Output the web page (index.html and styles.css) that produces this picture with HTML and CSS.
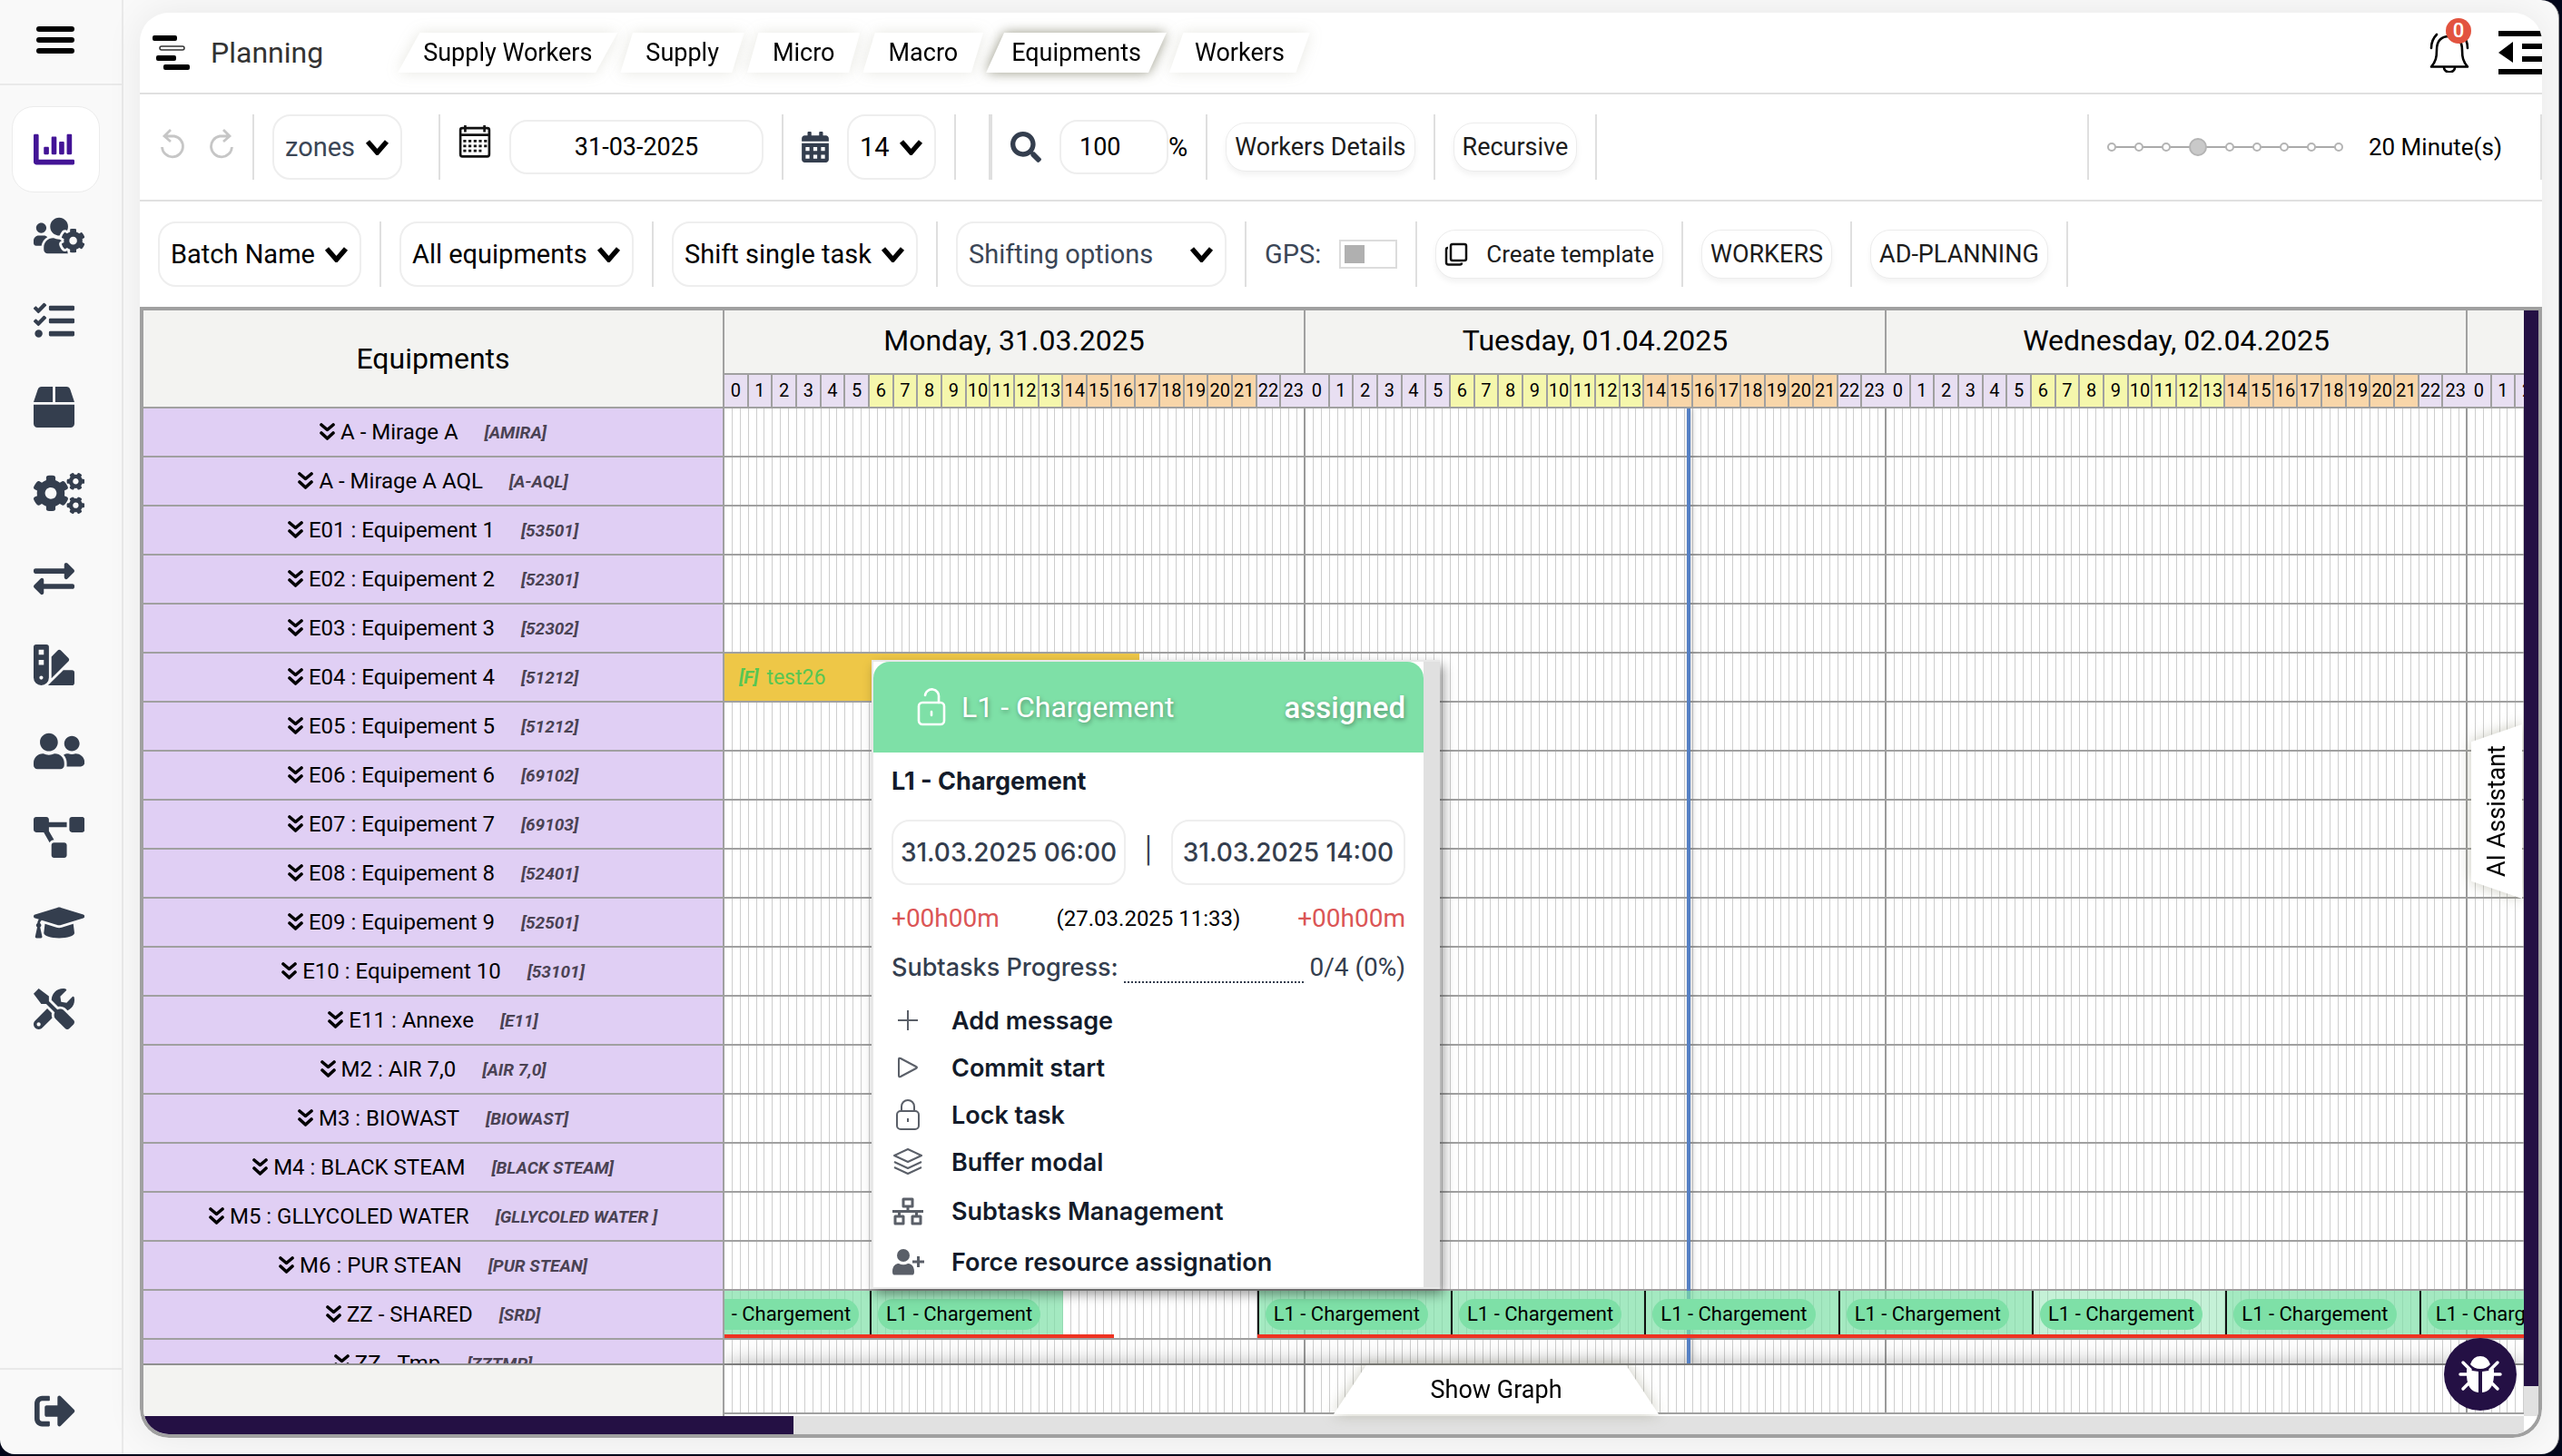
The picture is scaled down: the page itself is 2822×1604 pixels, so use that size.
FILE: index.html
```html
<!DOCTYPE html>
<html lang="en">

<head>
  <meta charset="UTF-8">
  <meta name="viewport" content="width=device-width, initial-scale=1.0">
  <title>Planning</title>
  <link rel="stylesheet" href="styles.css">
</head>

<body>
  <svg class="sprite" aria-hidden="true">
    <symbol id="i-caret" viewBox="0 0 27 18"><path d="M3 3l10.500 12L24 3" fill="none" stroke="#000" stroke-width="5.500"/></symbol>
    <symbol id="i-double" viewBox="0 0 17 20"><path d="M2 2l6.500 5.500L15 2M2 11l6.500 6L15 11" fill="none" stroke="#000" stroke-width="3.600" stroke-linecap="round" stroke-linejoin="round"/></symbol>
    <symbol id="i-gear" viewBox="0 0 640 512"><path fill-rule="evenodd" d="M512.1 191l-8.2 14.3c-3 5.300-9.400 7.500-15.100 5.400-11.800-4.400-22.600-10.700-32.100-18.600-4.600-3.800-5.800-10.500-2.800-15.700l8.200-14.300c-6.900-8-12.300-17.300-15.900-27.400h-16.500c-6 0-11.200-4.300-12.200-10.300-2-12-2.100-24.600 0-37.100 1-6 6.200-10.400 12.200-10.400h16.500c3.600-10.100 9-19.400 15.900-27.400l-8.200-14.300c-3-5.200-1.900-11.900 2.800-15.700 9.500-7.900 20.400-14.200 32.100-18.600 5.700-2.100 12.100.1 15.100 5.400l8.200 14.300c10.500-1.900 21.200-1.900 31.700 0L552 6.300c3-5.300 9.400-7.500 15.100-5.400 11.800 4.400 22.600 10.700 32.100 18.600 4.600 3.800 5.800 10.500 2.800 15.700l-8.200 14.300c6.900 8 12.300 17.300 15.900 27.400h16.500c6 0 11.200 4.300 12.200 10.300 2 12 2.100 24.600 0 37.100-1 6-6.200 10.400-12.200 10.400h-16.500c-3.600 10.100-9 19.400-15.900 27.400l8.200 14.300c3 5.200 1.900 11.900-2.800 15.700-9.500 7.900-20.400 14.200-32.100 18.600-5.700 2.100-12.100-.1-15.100-5.400l-8.200-14.300c-10.400 1.900-21.200 1.900-31.700 0zm-10.500-58.800c38.500 29.600 82.400-14.300 52.800-52.800-38.500-29.700-82.400 14.300-52.800 52.800z"/></symbol>
  </svg>

  <div class="window">
    <aside class="sidebar">
      <button class="burger" aria-label="Menu"><span></span><span></span><span></span></button>
      <nav class="side-nav">
        <a href="#" class="active" aria-label="Planning"><svg viewBox="0 0 512 512"><path d="M332.8 320h38.4c6.4 0 12.8-6.4 12.8-12.8V172.8c0-6.4-6.4-12.8-12.8-12.8h-38.4c-6.4 0-12.8 6.4-12.8 12.8v134.4c0 6.4 6.4 12.8 12.8 12.8zm96 0h38.4c6.4 0 12.8-6.4 12.8-12.8V76.8c0-6.4-6.4-12.8-12.8-12.8h-38.4c-6.4 0-12.8 6.4-12.8 12.8v230.4c0 6.4 6.4 12.8 12.8 12.8zm-288 0h38.4c6.4 0 12.8-6.4 12.8-12.8v-70.4c0-6.4-6.4-12.8-12.8-12.8h-38.4c-6.4 0-12.8 6.4-12.8 12.8v70.4c0 6.4 6.4 12.8 12.8 12.8zm96 0h38.4c6.4 0 12.8-6.4 12.8-12.8V108.8c0-6.4-6.4-12.8-12.8-12.8h-38.4c-6.4 0-12.8 6.4-12.8 12.8v198.4c0 6.4 6.4 12.8 12.8 12.8zM496 384H64V80c0-8.84-7.16-16-16-16H16C7.16 64 0 71.16 0 80v336c0 17.67 14.33 32 32 32h464c8.84 0 16-7.16 16-16v-32c0-8.84-7.16-16-16-16z"/></svg></a>
        <a href="#" aria-label="Teams"><svg viewBox="0 0 640 512"><path d="M610.5 341.3c2.6-14.1 2.6-28.5 0-42.6l25.8-14.9c3-1.7 4.3-5.2 3.3-8.5-6.7-21.6-18.2-41.2-33.2-57.4-2.3-2.5-6-3.1-9-1.4l-25.8 14.9c-10.9-9.3-23.4-16.5-36.9-21.3v-29.8c0-3.4-2.4-6.4-5.7-7.1-22.3-5-45-4.8-66.2 0-3.3.7-5.7 3.7-5.7 7.1v29.8c-13.5 4.8-26 12-36.9 21.3l-25.8-14.9c-2.9-1.7-6.7-1.1-9 1.4-15 16.2-26.5 35.8-33.2 57.4-1 3.3.4 6.8 3.3 8.5l25.8 14.9c-2.6 14.1-2.6 28.5 0 42.6l-25.8 14.9c-3 1.7-4.3 5.2-3.3 8.5 6.7 21.6 18.2 41.1 33.2 57.4 2.3 2.5 6 3.1 9 1.4l25.8-14.9c10.9 9.3 23.4 16.5 36.9 21.3v29.8c0 3.4 2.4 6.4 5.7 7.1 22.3 5 45 4.8 66.2 0 3.3-.7 5.7-3.7 5.7-7.1v-29.8c13.5-4.8 26-12 36.9-21.3l25.8 14.9c2.9 1.7 6.7 1.1 9-1.4 15-16.2 26.5-35.8 33.2-57.4 1-3.3-.4-6.8-3.3-8.5l-25.8-14.9zM496 368.500c-26.8 0-48.500-21.8-48.500-48.500s21.8-48.500 48.500-48.500 48.500 21.8 48.500 48.500-21.7 48.500-48.500 48.500zM96 224c35.3 0 64-28.7 64-64s-28.7-64-64-64-64 28.7-64 64 28.7 64 64 64zm224 32c1.9 0 3.7-.5 5.6-.6 8.3-21.7 20.5-42.1 36.3-59.2 7.4-8 17.9-12.6 28.9-12.6 6.9 0 13.7 1.8 19.6 5.3l7.9 4.6c.8-.5 1.6-.9 2.4-1.4 7-14.6 11.2-30.8 11.2-48 0-61.9-50.1-112-112-112S208 82.1 208 144c0 61.9 50.1 112 112 112zm105.2 194.5c-2.3-1.2-4.6-2.6-6.8-3.9-8.2 4.8-15.3 9.8-27.5 9.8-10.9 0-21.4-4.6-28.9-12.6-18.3-19.8-32.3-43.9-40.2-69.6-10.7-34.5 24.9-49.7 25.8-50.3-.1-2.6-.1-5.2 0-7.8l-7.9-4.6c-3.8-2.2-7-5-9.8-8.1-3.3.2-6.5.6-9.8.6-24.6 0-47.6-6-68.5-16h-8.3C179.6 288 128 339.600 128 403.2V432c0 26.5 21.5 48 48 48h255.4c-3.7-6-6.2-12.8-6.2-20.3v-9.2zM173.1 274.6C161.5 263.1 145.6 256 128 256H64c-35.3 0-64 28.7-64 64v32c0 17.7 14.3 32 32 32h65.9c6.3-47.4 34.9-87.3 75.2-109.4z"/></svg></a>
        <a href="#" aria-label="Tasks"><svg viewBox="0 0 512 512"><path d="M139.610 35.500a12 12 0 0 0-17 0L58.930 98.810l-22.700-22.120a12 12 0 0 0-17 0L3.530 92.410a12 12 0 0 0 0 17l47.590 47.400a12.780 12.780 0 0 0 17.610 0l15.590-15.620L156.520 69a12.090 12.090 0 0 0 .09-17zm0 159.190a12 12 0 0 0-17 0l-63.680 63.720-22.700-22.100a12 12 0 0 0-17 0L3.530 252a12 12 0 0 0 0 17L51 316.500a12.770 12.770 0 0 0 17.600 0l15.700-15.690 72.200-72.220a12 12 0 0 0 .09-16.900zM64 368c-26.490 0-48.590 21.500-48.590 48S37.530 464 64 464a48 48 0 0 0 0-96zm432 16H208a16 16 0 0 0-16 16v32a16 16 0 0 0 16 16h288a16 16 0 0 0 16-16v-32a16 16 0 0 0-16-16zm0-320H208a16 16 0 0 0-16 16v32a16 16 0 0 0 16 16h288a16 16 0 0 0 16-16V80a16 16 0 0 0-16-16zm0 160H208a16 16 0 0 0-16 16v32a16 16 0 0 0 16 16h288a16 16 0 0 0 16-16v-32a16 16 0 0 0-16-16z"/></svg></a>
        <a href="#" aria-label="Products"><svg viewBox="0 0 512 512"><path d="M509.5 184.6L458.9 32.8C452.4 13.2 434.1 0 413.4 0H272v192h238.7c-.4-2.500-.4-5-1.2-7.4zM240 0H98.6c-20.7 0-39 13.2-45.500 32.8L2.500 184.6c-.8 2.4-.8 4.9-1.2 7.4H240V0zM0 224v240c0 26.500 21.500 48 48 48h416c26.500 0 48-21.500 48-48V224H0z"/></svg></a>
        <a href="#" aria-label="Settings"><svg viewBox="0 0 640 512"><path fill-rule="evenodd" d="M386.3 286.1l33.7 16.8c10.1 5.8 14.5 18.1 10.5 29.1-8.9 24.2-26.4 46.4-42.6 65.8-7.4 8.9-20.2 11.1-30.3 5.3l-29.1-16.8c-16 13.7-34.6 24.6-54.9 31.7v33.6c0 11.6-8.3 21.6-19.7 23.6-24.6 4.2-50.4 4.4-75.9 0-11.5-2-20-11.9-20-23.6V418c-20.3-7.2-38.9-18-54.9-31.7L74 403c-10 5.8-22.9 3.6-30.3-5.3-16.2-19.4-33.3-41.6-42.2-65.7-4-10.9.4-23.2 10.5-29.1l33.3-16.8c-3.9-20.9-3.9-42.4 0-63.4L12 205.8c-10.1-5.8-14.6-18.1-10.5-29 8.9-24.2 26-46.4 42.2-65.8 7.4-8.9 20.2-11.1 30.3-5.3l29.1 16.8c16-13.7 34.6-24.6 54.9-31.7V57.1c0-11.5 8.2-21.5 19.6-23.5 24.6-4.2 50.5-4.4 76-.1 11.5 2 20 11.9 20 23.6v33.6c20.3 7.2 38.9 18 54.9 31.7l29.1-16.8c10-5.8 22.9-3.6 30.3 5.3 16.2 19.4 33.2 41.6 42.1 65.8 4 10.9.1 23.2-10 29.1l-33.7 16.8c3.9 21 3.9 42.5 0 63.5zm-117.6 21.1c59.2-77-28.7-164.9-105.7-105.7-59.2 77 28.7 164.9 105.7 105.7z"/><use href="#i-gear" width="640" height="512"/><use href="#i-gear" width="640" height="512" y="300"/></svg></a>
        <a href="#" aria-label="Transfers"><svg viewBox="0 0 512 512"><path d="M0 168v-16c0-13.255 10.745-24 24-24h360V80c0-21.367 25.899-32.042 40.971-16.971l80 80c9.372 9.373 9.372 24.569 0 33.941l-80 80C409.956 271.982 384 261.456 384 240v-48H24c-13.255 0-24-10.745-24-24zm488 152H128v-48c0-21.314-25.862-32.080-40.971-16.971l-80 80c-9.372 9.373-9.372 24.569 0 33.941l80 80C102.057 463.997 128 453.437 128 432v-48h360c13.255 0 24-10.745 24-24v-16c0-13.255-10.745-24-24-24z"/></svg></a>
        <a href="#" aria-label="Colors"><svg viewBox="0 0 512 512"><path d="M434.660,167.710h0L344.500,77.360a31.830,31.830,0,0,0-45-.07h0l-.07.07L224,152.880V424L434.660,212.900A32,32,0,0,0,434.660,167.710ZM480,320H373.090L186.680,506.510c-2.060,2.070-4.500,3.580-6.680,5.490H480a32,32,0,0,0,32-32V352A32,32,0,0,0,480,320ZM192,32A32,32,0,0,0,160,0H32A32,32,0,0,0,0,32V416a96,96,0,0,0,192,0ZM96,440a24,24,0,1,1,24-24A24,24,0,0,1,96,440Zm32-184H64V192h64Zm0-128H64V64h64Z"/></svg></a>
        <a href="#" aria-label="Users"><svg viewBox="0 0 640 512"><path d="M192 256c61.9 0 112-50.1 112-112S253.9 32 192 32 80 82.1 80 144s50.1 112 112 112zm76.8 32h-8.3c-20.8 10-43.9 16-68.5 16s-47.6-6-68.5-16h-8.3C51.6 288 0 339.6 0 403.2V432c0 26.5 21.5 48 48 48h288c26.5 0 48-21.5 48-48v-28.8c0-63.6-51.6-115.2-115.2-115.2zM480 256c53 0 96-43 96-96s-43-96-96-96-96 43-96 96 43 96 96 96zm48 32h-3.8c-13.9 4.8-28.6 8-44.2 8s-30.3-3.2-44.2-8H432c-20.4 0-39.2 5.9-55.7 15.4 24.4 26.3 39.7 61.2 39.7 99.8v38.4c0 2.2-.5 4.3-.6 6.4H592c26.5 0 48-21.5 48-48 0-61.9-50.1-112-112-112z"/></svg></a>
        <a href="#" aria-label="Workflows"><svg viewBox="0 0 640 512"><path d="M384 320H256c-17.670 0-32 14.330-32 32v128c0 17.670 14.330 32 32 32h128c17.670 0 32-14.330 32-32V352c0-17.670-14.330-32-32-32zM192 32c0-17.670-14.330-32-32-32H32C14.330 0 0 14.330 0 32v128c0 17.670 14.330 32 32 32h95.720l73.160 128.040C211.980 300.980 232.400 288 256 288h.28L192 175.510V128h224V64H192V32zM608 0H480c-17.670 0-32 14.330-32 32v128c0 17.670 14.330 32 32 32h128c17.670 0 32-14.330 32-32V32c0-17.670-14.330-32-32-32z"/></svg></a>
        <a href="#" aria-label="Training"><svg viewBox="0 0 640 512"><path d="M622.34 153.2L343.4 67.5c-15.2-4.67-31.6-4.67-46.79 0L17.66 153.2c-23.54 7.23-23.54 38.36 0 45.59l48.63 14.94c-10.67 13.19-17.23 29.28-17.88 46.9C38.78 266.15 32 276.11 32 288c0 10.78 5.68 19.85 13.86 25.65L20.33 428.53C18.11 438.52 25.71 448 35.94 448h56.11c10.24 0 17.84-9.48 15.62-19.47L82.14 313.65C90.32 307.85 96 298.78 96 288c0-11.57-6.47-21.25-15.66-26.87.76-15.02 8.44-28.3 20.69-36.72L296.6 284.5c9.06 2.78 26.44 6.25 46.79 0l278.95-85.7c23.55-7.24 23.55-38.36 0-45.6zM352.79 315.09c-28.53 8.76-52.84 3.92-65.59 0l-145.02-44.55L128 384c0 35.35 85.96 64 192 64s192-28.65 192-64l-14.18-113.47-145.03 44.56z"/></svg></a>
        <a href="#" aria-label="Tools"><svg viewBox="0 0 512 512"><path d="M501.1 395.7L384 278.6c-23.1-23.1-57.6-27.6-85.4-13.9L192 158.1V96L64 0 0 64l96 128h62.1l106.6 106.6c-13.6 27.8-9.2 62.3 13.9 85.4l117.1 117.1c14.6 14.6 38.2 14.6 52.7 0l52.7-52.7c14.5-14.6 14.5-38.2 0-52.7zM331.7 225c28.3 0 54.9 11 74.9 31l19.4 19.4c15.8-6.9 30.8-16.5 43.8-29.5 37.1-37.1 49.7-89.3 37.9-136.7-2.2-9-13.5-12.1-20.1-5.5l-74.4 74.4-67.9-11.3L334 98.9l74.4-74.4c6.6-6.6 3.4-17.9-5.7-20.2-47.4-11.7-99.6.9-136.6 37.9-28.5 28.5-41.9 66.1-41.2 103.6l82.1 82.1c8.1-1.9 16.5-2.9 24.7-2.9zm-103.9 82l-56.7-56.7L18.7 402.8c-25 25-25 65.500 0 90.500s65.500 25 90.500 0l123.6-123.6c-7.6-19.9-9.9-41.6-5-62.7zM64 472c-13.2 0-24-10.8-24-24 0-13.3 10.7-24 24-24s24 10.7 24 24c0 13.2-10.7 24-24 24z"/></svg></a>
      </nav>
      <a href="#" class="logout" aria-label="Log out"><svg viewBox="0 0 512 512"><path d="M497 273L329 441c-15 15-41 4.5-41-17v-96H152c-13.3 0-24-10.7-24-24v-96c0-13.3 10.7-24 24-24h136V88c0-21.4 25.9-32 41-17l168 168c9.3 9.4 9.3 24.600 0 34zM192 436v-40c0-6.6-5.4-12-12-12H96c-17.7 0-32-14.3-32-32V160c0-17.7 14.3-32 32-32h84c6.6 0 12-5.4 12-12V76c0-6.6-5.4-12-12-12H96c-53 0-96 43-96 96v192c0 53 43 96 96 96h84c6.6 0 12-5.4 12-12z"/></svg></a>
    </aside>

    <main class="card">
      <header class="page-head">
        <svg class="head-icon" viewBox="0 0 42 38">
          <rect x="0" y="0" width="27" height="6" rx="2"/>
          <rect x="8" y="12" width="27" height="4" rx="2" fill="#fff" stroke="#333" stroke-width="1.500"/>
          <rect x="4" y="22" width="22" height="6" rx="2"/>
          <rect x="12" y="32" width="29" height="6" rx="2"/>
        </svg>
        <h1>Planning</h1>
        <nav class="tabs">
          <span class="tab"><a href="#">Supply Workers</a></span>
          <span class="tab"><a href="#">Supply</a></span>
          <span class="tab"><a href="#">Micro</a></span>
          <span class="tab"><a href="#">Macro</a></span>
          <span class="tab current"><a href="#">Equipments</a></span>
          <span class="tab"><a href="#">Workers</a></span>
        </nav>
        <button class="bell" aria-label="Notifications">
          <svg viewBox="0 0 44 44" fill="none" stroke="#000" stroke-width="2.600" stroke-linecap="round" stroke-linejoin="round">
            <path d="M2 37.500h40C37 32 36 27 36 19C36 9 31 4 22 4S8 9 8 19c0 8-1 13-6 18.500z"/>
            <path d="M16 38.500a6 5 0 0 0 12 0M8 2Q2 8 2 17M36 2q6 6 6 15"/>
          </svg>
          <span class="badge">0</span>
        </button>
        <button class="fold" aria-label="Collapse panel">
          <svg viewBox="0 0 48 48"><path d="M0 0h48v6H0zM26 14h22v6H26zM26 28h22v6H26zM0 42h48v6H0zM0 24l16-12v23z"/></svg>
        </button>
      </header>

      <section class="toolbar">
        <div class="history">
          <button aria-label="Undo"><svg viewBox="0 0 30 34"><path d="M6 8h10a11.500 11.500 0 1 1-13.500 12M12 1L5 8l7 6" fill="none" stroke="#c6c6c6" stroke-width="2.800"/></svg></button>
          <button aria-label="Redo"><svg viewBox="0 0 30 34"><path d="M24 8H14a11.500 11.500 0 1 0 13.500 12M18 1l7 7-7 6" fill="none" stroke="#c6c6c6" stroke-width="2.800"/></svg></button>
        </div>
        <i class="sep"></i>
        <label class="select muted wide-gap"><select aria-label="Zones"><option>zones</option></select><svg><use href="#i-caret"/></svg></label>
        <i class="sep"></i>
        <label class="cal-label" for="start-date" aria-label="Start date">
          <svg viewBox="0 0 34 34"><path d="M2 5q0-2 2-2h26q2 0 2 2v25q0 2.500-2 2.500H4q-2 0-2-2.500zM1 10h32M7 0v7M27 0v7" fill="none" stroke="#111" stroke-width="2.500"/><path d="M5 16.500h25M5 21.500h25M5 26.500h19" stroke="#111" stroke-width="2.600" stroke-dasharray="3 2.400"/></svg>
        </label>
        <input class="field date" id="start-date" type="text" value="31-03-2025">
        <i class="sep"></i>
        <svg class="cal-solid" viewBox="0 0 448 512"><path d="M0 464c0 26.500 21.500 48 48 48h352c26.500 0 48-21.500 48-48V192H0zM400 64h-48V16c0-8.800-7.200-16-16-16h-32c-8.800 0-16 7.200-16 16v48H160V16c0-8.800-7.200-16-16-16h-32c-8.800 0-16 7.200-16 16v48H48C21.500 64 0 85.500 0 112v48h448v-48c0-26.500-21.500-48-48-48z"/><path fill="#fff" d="M64 256h64v64H64zM192 256h64v64h-64zM320 256h64v64h-64zM64 384h64v64H64zM192 384h64v64h-64zM320 384h64v64h-64z"/></svg>
        <label class="select"><select aria-label="Number of days"><option>14</option></select><svg><use href="#i-caret"/></svg></label>
        <i class="sep"></i>
        <i class="sep thick"></i>
        <label for="zoom" aria-label="Zoom"><svg class="glass" viewBox="0 0 512 512"><path d="M505 442.7L405.3 343c-4.5-4.5-10.6-7-17-7H372c27.6-35.3 44-79.7 44-128C416 93.1 322.9 0 208 0S0 93.1 0 208s93.1 208 208 208c48.3 0 92.7-16.4 128-44v16.3c0 6.4 2.5 12.5 7 17l99.7 99.7c9.4 9.4 24.6 9.4 33.9 0l28.3-28.3c9.4-9.4 9.4-24.6.1-34zM208 336c-70.7 0-128-57.2-128-128 0-70.7 57.2-128 128-128 70.7 0 128 57.2 128 128 0 70.7-57.2 128-128 128z"/></svg></label>
        <div class="zoom-box"><input class="field zoom" id="zoom" type="text" value="100"><span>%</span></div>
        <i class="sep"></i>
        <button class="btn">Workers Details</button>
        <i class="sep"></i>
        <button class="btn">Recursive</button>
        <i class="sep"></i>
        <i class="sep push"></i>
        <div class="steps" role="radiogroup" aria-label="Time step">
          <input type="radio" name="step" aria-label="1 minute"><input type="radio" name="step" aria-label="5 minutes"><input type="radio" name="step" aria-label="10 minutes"><input type="radio" name="step" aria-label="20 minutes" checked><input type="radio" name="step" aria-label="30 minutes"><input type="radio" name="step" aria-label="1 hour"><input type="radio" name="step" aria-label="2 hours"><input type="radio" name="step" aria-label="4 hours"><input type="radio" name="step" aria-label="8 hours">
        </div>
        <span class="step-text">20 Minute(s)</span>
        <i class="sep"></i>
      </section>

      <section class="toolbar">
        <label class="select"><select aria-label="Batch"><option>Batch Name</option></select><svg><use href="#i-caret"/></svg></label>
        <i class="sep"></i>
        <label class="select"><select aria-label="Equipments filter"><option>All equipments</option></select><svg><use href="#i-caret"/></svg></label>
        <i class="sep"></i>
        <label class="select"><select aria-label="Shift mode"><option>Shift single task</option></select><svg><use href="#i-caret"/></svg></label>
        <i class="sep"></i>
        <label class="select muted options"><select aria-label="Shifting options"><option>Shifting options</option></select><svg><use href="#i-caret"/></svg></label>
        <i class="sep"></i>
        <label class="gps">GPS: <input type="checkbox"></label>
        <i class="sep"></i>
        <button class="btn template"><svg viewBox="0 0 26 26" fill="none" stroke="#111" stroke-width="2.500" stroke-linejoin="round"><rect x="7" y="2" width="17" height="18" rx="2"/><path d="M4 6q-2 0-2 2v14q0 2.500 2.500 2.500H17q2 0 2-2"/></svg>Create template</button>
        <i class="sep"></i>
        <button class="btn">WORKERS</button>
        <i class="sep"></i>
        <button class="btn">AD-PLANNING</button>
        <i class="sep"></i>
      </section>

      <section class="gantt">
        <div class="gantt-main">
          <div class="gantt-head">
            <div class="corner">Equipments</div>
            <div class="days" id="days"></div>
          </div>

          <div class="gantt-body">
            <div class="rows" id="rows"></div>
            <div class="now"></div>

            <div class="popup">
              <div class="popup-scroll">
                <div class="popup-head">
                  <svg viewBox="0 0 32 42" fill="none" stroke="#fff" stroke-width="2.600" stroke-linecap="round"><rect x="2" y="16" width="28" height="24" rx="4"/><path d="M9 8a7 7 0 0 1 15 2v6M16 26v4"/></svg>
                  <span class="popup-name">L1 - Chargement</span>
                  <strong>assigned</strong>
                </div>
                <h2>L1 - Chargement</h2>
                <div class="range">
                  <input type="text" aria-label="Start" value="31.03.2025 06:00">
                  <span>|</span>
                  <input type="text" aria-label="End" value="31.03.2025 14:00">
                </div>
                <div class="delays"><span class="late">+00h00m</span><span>(27.03.2025 11:33)</span><span class="late">+00h00m</span></div>
                <div class="progress"><span>Subtasks Progress:</span><i></i><span class="count">0/4 (0%)</span></div>
                <ul class="menu">
                  <li><button><svg viewBox="0 0 36 36"><path d="M18 7v22M7 18h22"/></svg>Add message</button></li>
                  <li><button><svg viewBox="0 0 36 36"><path d="M8 9v18q0 2 2 1l17-9q2-1 0-2L10 8q-2-1-2 1z"/></svg>Commit start</button></li>
                  <li><button><svg viewBox="0 0 36 36"><rect x="6" y="14" width="24" height="20" rx="4"/><path d="M11 14V9a7 7 0 0 1 14 0v5M18 22v4"/></svg>Lock task</button></li>
                  <li><button><svg viewBox="0 0 36 36"><path d="M18 4l15 7-15 7-15-7zM3 18l15 7 15-7M3 24l15 7 15-7"/></svg>Buffer modal</button></li>
                  <li class="tall"><button><svg viewBox="0 0 36 36"><g stroke-width="3"><rect x="13" y="5" width="10" height="8"/><rect x="4" y="24" width="9" height="8"/><rect x="23" y="24" width="9" height="8"/><path d="M18 13v5M1 18.500h34M8.500 18v6M27.500 18v6"/></g></svg>Subtasks Management</button></li>
                  <li class="tall"><button><svg viewBox="0 0 36 36"><g fill="#5a5f68" stroke="none"><circle cx="13" cy="11" r="7"/><path d="M1 29c0-7 4-9 7-9q5 2.500 10 0c3 0 7 2 7 9 0 3-1 3.500-3 3.500H4c-2 0-3-.5-3-3.500z"/><path d="M28 12h3v4.500h5v3h-5V24h-3v-4.500h-5v-3h5z"/></g></svg>Force resource assignation</button></li>
                </ul>
              </div>
              <div class="popup-bar"></div>
            </div>

            <div class="assistant"><button>AI Assistant</button></div>
          </div>

          <div class="gantt-foot">
            <div class="foot-name"></div>
            <div class="foot-track"></div>
            <div class="graph-tab"><button>Show Graph</button></div>
          </div>
        </div>
        <div class="bar-y"><span></span></div>
        <div class="bar-x"><span></span></div>
      </section>
    </main>
  </div>

  <button class="bug" aria-label="Report a bug">
    <svg viewBox="0 0 48 40"><g stroke="#fff" stroke-width="3.500" stroke-linecap="round" fill="none"><path d="M5 7l8 8M43 7l-8 8M2 20h10M46 20H36M5 36l8-8M43 36l-8-8"/></g><path fill="#fff" d="M13 9Q16 0 24 0t11 9q-4 5-11 5T13 9zM9 14q7 3 13 3v23Q10 39 9 22zM39 14q-7 3-13 3v23q12-1 13-18z"/></svg>
  </button>

  <script src="planning.js"></script>
</body>

</html>
```
FILE: styles.css
```css
* {
  box-sizing: border-box;
}

:root {
  --day: 640px;
  --line: #a0a0a0;
  --soft: #e0e0e0;
  --slate: #343e4e;
  --purple: #241044;
  --green: #7ee0a7;
}

body {
  margin: 0;
  background: #02061a;
  font-family: Roboto, "Liberation Sans", sans-serif;
  color: #000;
}

button,
input,
select {
  font-family: inherit;
  font-size: 27px;
  color: inherit;
  margin: 0;
}

button {
  background: none;
  border: 0;
  padding: 0;
}

svg {
  display: block;
}

.sprite {
  position: absolute;
  width: 0;
  height: 0;
}

.window {
  display: flex;
  height: calc(100vh - 2px);
  margin-right: 3px;
  background: #f9f9f9;
  border-right: 1px solid #999;
  border-radius: 0 20px 20px 16px;
  overflow: hidden;
}

/* sidebar */
.sidebar {
  display: flex;
  flex-direction: column;
  width: 136px;
  flex: none;
  border-right: 2px solid #e9e9e9;
}

.burger {
  display: flex;
  flex-direction: column;
  justify-content: center;
  gap: 6px;
  height: 94px;
  padding: 0 0 4px 40px;
  border-bottom: 2px solid #e9e9e9;
}

.burger span {
  width: 42px;
  height: 6px;
  border-radius: 3px;
  background: #000;
}

.side-nav {
  display: grid;
  grid-auto-rows: 1fr;
  height: 1042px;
  margin: 23px 24px 0 13px;
}

.side-nav a {
  display: flex;
  align-items: center;
  padding-left: 23px;
  border: 1px solid transparent;
  border-radius: 24px;
}

.side-nav .active {
  background: #fff;
  border-color: #ececec;
}

.side-nav svg,
.logout svg {
  height: 45px;
  fill: var(--slate);
}

.side-nav .active svg {
  fill: #431496;
}

.logout {
  display: flex;
  align-items: center;
  height: 95px;
  margin-top: auto;
  padding: 0 0 2px 38px;
  border-top: 2px solid #e9e9e9;
}

/* white card */
.card {
  display: flex;
  flex-direction: column;
  flex: 1;
  min-width: 0;
  margin: 14px 18px 18px;
  background: #fff;
  border-radius: 32px;
  overflow: hidden;
  box-shadow: 0 0 40px rgba(0, 0, 0, 0.07);
}

.page-head {
  display: flex;
  align-items: center;
  height: 90px;
  padding-left: 14px;
  border-bottom: 2px solid var(--soft);
}

.head-icon {
  width: 42px;
  height: 38px;
}

.page-head h1 {
  margin: 0 82px 0 22px;
  font-size: 32px;
  font-weight: 400;
  color: #333;
}

.tabs {
  display: flex;
  gap: 3px;
  margin-right: auto;
}

.tab {
  filter: drop-shadow(0 0 8px rgba(120, 120, 90, 0.18));
}

.tab.current {
  filter: drop-shadow(0 0 7px rgba(80, 80, 50, 0.6));
}

.tab a {
  display: block;
  padding: 0 28px;
  font-size: 27px;
  line-height: 44px;
  color: #000;
  text-decoration: none;
  background: #fff;
  clip-path: polygon(10% 0, 100% 0, 90% 100%, 0 100%);
}

.bell {
  position: relative;
  width: 44px;
  height: 44px;
  margin-right: 32px;
}

.badge {
  position: absolute;
  top: -16px;
  left: 18px;
  width: 28px;
  height: 28px;
  border-radius: 50%;
  background: #e2533f;
  color: #fff;
  font-size: 22px;
  font-weight: 500;
  line-height: 28px;
}

.fold svg {
  width: 48px;
  height: 48px;
}

/* toolbars */
.toolbar {
  display: flex;
  align-items: center;
  gap: 20px;
  height: 118px;
  padding-left: 20px;
  border-bottom: 2px solid var(--soft);
}

.toolbar + .toolbar {
  height: 116px;
  border-bottom: 0;
}

.sep {
  flex: none;
  width: 2px;
  height: 72px;
  background: #dfdfdf;
}

.sep.thick {
  width: 4px;
  margin-left: 16px;
}

.wide-gap {
  margin-right: 20px;
}

.push {
  margin-left: auto;
}

.history {
  display: flex;
  gap: 22px;
  margin: 0 0 6px 2px;
}

.history svg {
  width: 30px;
  height: 34px;
}

.select {
  position: relative;
  display: block;
}

.select select {
  appearance: none;
  width: 100%;
  height: 72px;
  padding: 0 49px 0 12px;
  border: 2px solid #eeeeee;
  border-radius: 20px;
  background: #fff;
  font-size: 29px;
}

.select svg {
  position: absolute;
  right: 14px;
  top: 27px;
  width: 27px;
  height: 18px;
  pointer-events: none;
}

.muted,
.gps {
  color: #3b4656;
}

.options {
  width: 298px;
}

.cal-label {
  margin-bottom: 12px;
}

.cal-label svg {
  width: 36px;
  height: 36px;
}

.field {
  height: 60px;
  border: 2px solid #eeeeee;
  border-radius: 20px;
  background: #fff;
}

.date {
  width: 280px;
  text-align: center;
}

.cal-solid {
  width: 30px;
  height: 34px;
  fill: var(--slate);
}

.glass {
  width: 34px;
  height: 34px;
  fill: var(--slate);
}

.zoom-box {
  display: flex;
  align-items: center;
  font-size: 29px;
}

.zoom {
  width: 120px;
  padding: 0 20px;
}

.btn {
  height: 54px;
  padding: 0 9px;
  border: 1px solid #ececec;
  border-radius: 22px;
  background: #fff;
  box-shadow: 0 4px 6px rgba(0, 0, 0, 0.05);
  color: #1c1c1c;
}

.template {
  display: flex;
  align-items: center;
  gap: 20px;
  font-size: 26px;
}

.template svg {
  width: 26px;
  height: 26px;
}

.gps {
  display: flex;
  align-items: center;
  gap: 20px;
  font-size: 29px;
}

.gps input {
  appearance: none;
  width: 64px;
  height: 32px;
  padding: 4px;
  border: 2px solid #dcdcdc;
}

.gps input::before {
  content: "";
  display: block;
  width: 22px;
  height: 20px;
  background: #b0b0b0;
}

/* round dots joined by a line */
.steps {
  display: flex;
  align-items: center;
  gap: 20px;
  background: linear-gradient(#aaa, #aaa) center / calc(100% - 10px) 2px no-repeat;
}

.steps input {
  appearance: none;
  width: 10px;
  height: 10px;
  border: 2px solid #b4b4b4;
  border-radius: 50%;
  background: #fff;
}

.steps input:checked {
  width: 20px;
  height: 20px;
  background: #c9c9c9;
}

.step-text {
  margin: 0 22px 0 8px;
  font-size: 26px;
}

/* gantt */
.gantt {
  display: grid;
  grid-template-columns: minmax(0, 1fr) 16px;
  grid-template-rows: minmax(0, 1fr) 20px;
  flex: 1;
  min-height: 0;
  border: 4px solid #a0a0a0;
  border-radius: 0 0 32px 32px;
  overflow: hidden;
}

.gantt-main {
  display: flex;
  flex-direction: column;
  min-height: 0;
}

.gantt-head {
  display: flex;
  height: 108px;
  flex: none;
  background: #f3f3f1;
  border-bottom: 2px solid var(--line);
}

.corner,
.name,
.foot-name {
  flex: none;
  width: 640px;
  border-right: 2px solid var(--line);
}

.corner {
  display: flex;
  align-items: center;
  justify-content: center;
  font-size: 32px;
}

.days {
  display: flex;
  flex: 1;
  overflow: hidden;
}

.day {
  flex: none;
  width: var(--day);
}

.day-title {
  height: 71px;
  line-height: 66px;
  text-align: center;
  font-size: 32px;
  border-right: 2px solid var(--line);
  border-bottom: 2px solid var(--line);
}

.hours {
  display: grid;
  grid-template-columns: repeat(24, 1fr);
  height: 35px;
  font-size: 20px;
  line-height: 35px;
}

.hours span {
  display: flex;
  justify-content: center;
  min-width: 0;
  border-right: 2px solid var(--line);
}

.hours span:nth-child(24) {
  border-right: 0;
}

.night {
  background: #e8dff2;
}

.morning {
  background: #f5f7ac;
}

.evening {
  background: #f8d6a9;
}

.gantt-body {
  position: relative;
  flex: 1;
  min-height: 0;
  overflow: hidden;
}

.row {
  display: flex;
  height: 54px;
  border-bottom: 2px solid var(--line);
}

.name {
  display: flex;
  align-items: center;
  justify-content: center;
  background: #e0cff4;
  font-size: 24px;
}

.name svg {
  width: 17px;
  height: 20px;
  margin-right: 6px;
}

.name em {
  margin-left: 29px;
  font-size: 19px;
  font-weight: 700;
  color: #4a4253;
}

.track,
.foot-track {
  position: relative;
  flex: 1;
  overflow: hidden;
  background-color: #fff;
  background-image:
    repeating-linear-gradient(to right, transparent 0 calc(var(--day) - 2px), #9a9a9a calc(var(--day) - 2px) var(--day)),
    repeating-linear-gradient(to right, transparent 0 calc(var(--day) / 72 - 1px), #cecece calc(var(--day) / 72 - 1px) calc(var(--day) / 72));
}

.task {
  position: absolute;
  top: 0;
  bottom: 0;
  z-index: 2;
  display: flex;
  align-items: center;
  padding-left: 7px;
  border-left: 2px solid #111;
  background: rgba(126, 224, 167, 0.7);
  font-size: 22px;
  white-space: nowrap;
}

.task span {
  padding: 0 9px;
  line-height: 34px;
  border-radius: 17px;
  background: var(--green);
}

.task.light {
  background: rgba(126, 224, 167, 0.45);
}

.task.fixed {
  gap: 9px;
  padding-left: 16px;
  border: 0;
  background: #eec747;
  color: #57c653;
  font-size: 23px;
}

.fixed b {
  font-size: 20px;
  font-style: italic;
}

.late-line {
  position: absolute;
  bottom: 0;
  z-index: 2;
  height: 4px;
  background: #ee3322;
}

.now {
  position: absolute;
  top: 0;
  bottom: 0;
  left: 1700px;
  z-index: 1;
  width: 4px;
  background: #5580c4;
  box-shadow: 2px 0 6px rgba(0, 0, 0, 0.25);
}

.gantt-foot {
  position: relative;
  display: flex;
  height: 58px;
  flex: none;
  border-top: 2px solid #909090;
}

.foot-name {
  background: #f3f3f1;
}

.foot-track {
  height: 54px;
  border-bottom: 2px solid var(--line);
  overflow: visible;
  box-shadow: 0 -2px 24px rgba(0, 0, 0, 0.3);
  clip-path: inset(-26px 0 0 0);
}

.graph-tab {
  position: absolute;
  top: 0;
  left: 50%;
  z-index: 3;
  filter: drop-shadow(0 0 8px rgba(120, 120, 90, 0.4));
}

.graph-tab button {
  width: 358px;
  height: 54px;
  background: #fff;
  clip-path: polygon(10% 0, 90% 0, 100% 100%, 0 100%);
}

.bar-y {
  background: #e1e1e1;
}

.bar-y span {
  display: block;
  height: calc(100% - 33px);
  background: var(--purple);
}

.bar-x {
  background: #e1e1e1;
}

.bar-x span {
  display: block;
  width: 716px;
  height: 100%;
  background: var(--purple);
}

.assistant {
  position: absolute;
  top: 348px;
  right: 2px;
  z-index: 3;
  filter: drop-shadow(0 0 8px rgba(120, 120, 90, 0.4));
}

.assistant button {
  width: 56px;
  height: 192px;
  background: #fff;
  writing-mode: vertical-rl;
  transform: rotate(180deg);
  clip-path: polygon(0 0, 100% 10%, 100% 90%, 0 100%);
}

/* task popup */
.popup {
  position: absolute;
  top: 277px;
  left: 802px;
  z-index: 4;
  display: flex;
  width: 626px;
  height: 693px;
  border: 2px solid #e8e8e8;
  border-right: 0;
  background: #fff;
  box-shadow: 4px 6px 12px rgba(0, 0, 0, 0.4);
  font-family: Inter, "Liberation Sans", sans-serif;
  font-size: 28px;
  color: var(--slate);
}

.popup-scroll {
  flex: 1;
}

.popup-bar {
  width: 18px;
  background: #e0e0e0;
}

.popup-head {
  display: flex;
  align-items: center;
  height: 100px;
  padding: 0 20px 0 48px;
  border-radius: 18px 18px 0 0;
  background: var(--green);
  color: #fff;
  font-family: Roboto, "Liberation Sans", sans-serif;
  font-size: 32px;
  text-shadow: 1px 2px 5px rgba(0, 0, 0, 0.35);
}

.popup-head svg {
  width: 32px;
  height: 42px;
  margin-right: 17px;
}

.popup-head strong {
  margin-left: auto;
  font-size: 33px;
  font-weight: 500;
}

.popup h2 {
  margin: 0;
  padding: 12px 20px 0;
  font-size: 27px;
  font-weight: 700;
  line-height: 40px;
  color: #131b2a;
}

.range,
.delays,
.progress {
  display: flex;
  align-items: center;
  justify-content: space-between;
  margin: 22px 20px 0;
}

.range span {
  padding-bottom: 4px;
}

.range input {
  width: 258px;
  height: 72px;
  padding: 0;
  border: 2px solid #eeeeee;
  border-radius: 20px;
  text-align: center;
  font-size: 28px;
  font-weight: 500;
}

.delays {
  margin-top: 20px;
  font-family: Roboto, "Liberation Sans", sans-serif;
  font-size: 24px;
  line-height: 34px;
  color: #000;
}

.late {
  font-size: 28px;
  color: #db5555;
}

.progress {
  margin-top: 17px;
  font-size: 27px;
  font-weight: 500;
  line-height: 40px;
}

.progress i {
  flex: 1;
  height: 34px;
  margin: 0 6px;
  border-bottom: 2px dotted var(--slate);
}

.count {
  font-family: Roboto, "Liberation Sans", sans-serif;
  font-size: 28px;
  font-weight: 400;
}

.menu {
  margin: 12px 0 0;
  padding: 0;
  list-style: none;
}

.menu button {
  display: flex;
  align-items: center;
  height: 52px;
  padding-left: 20px;
  font-size: 27px;
  font-weight: 600;
  color: #131b2a;
}

.menu .tall button {
  height: 56px;
}

.menu svg {
  width: 36px;
  height: 36px;
  margin-right: 30px;
  fill: none;
  stroke: #5a5f68;
  stroke-width: 2;
  stroke-linejoin: round;
}

.bug {
  position: fixed;
  right: 50px;
  bottom: 50px;
  z-index: 5;
  display: flex;
  align-items: center;
  justify-content: center;
  width: 80px;
  height: 80px;
  border-radius: 50%;
  background: var(--purple);
}

.bug svg {
  width: 48px;
  height: 40px;
}
```
FILE: planning.js
```js
// title and number of hours loaded, the last day is only partly scrolled in
const days = [
  ["Monday, 31.03.2025", 24],
  ["Tuesday, 01.04.2025", 24],
  ["Wednesday, 02.04.2025", 24],
  ["", 3]
];

const equipments = [
  ["A - Mirage A", "AMIRA"],
  ["A - Mirage A AQL", "A-AQL"],
  ["E01 : Equipement 1", "53501"],
  ["E02 : Equipement 2", "52301"],
  ["E03 : Equipement 3", "52302"],
  ["E04 : Equipement 4", "51212"],
  ["E05 : Equipement 5", "51212"],
  ["E06 : Equipement 6", "69102"],
  ["E07 : Equipement 7", "69103"],
  ["E08 : Equipement 8", "52401"],
  ["E09 : Equipement 9", "52501"],
  ["E10 : Equipement 10", "53101"],
  ["E11 : Annexe", "E11"],
  ["M2 : AIR 7,0", "AIR 7,0"],
  ["M3 : BIOWAST", "BIOWAST"],
  ["M4 : BLACK STEAM", "BLACK STEAM"],
  ["M5 : GLLYCOLED WATER", "GLLYCOLED WATER "],
  ["M6 : PUR STEAN", "PUR STEAN"],
  ["ZZ - SHARED", "SRD"],
  ["ZZ - Tmp", "ZZTMP"]
];

// start and end are hours from the first midnight
const sharedTasks = [[-1.5, 6], [6, 14], [22, 30], [30, 38], [38, 46], [46, 54], [54, 62, "light"], [62, 70], [70, 78]];
const lateLines = [[-1.5, 16.1], [22, 78]];

function span(start, end) {
  return `left: calc(var(--day) * ${start} / 24); width: calc(var(--day) * ${end - start} / 24)`;
}

function shift(hour) {
  if (hour >= 6 && hour < 14) return "morning";
  if (hour >= 14 && hour < 22) return "evening";
  return "night";
}

function tasksFor(code) {
  if (code === "SRD") {
    return sharedTasks.map(([s, e, tone]) => `<div class="task ${tone || ""}" style="${span(s, e)}"><span>L1 - Chargement</span></div>`).join("")
      + lateLines.map(([s, e]) => `<div class="late-line" style="${span(s, e)}"></div>`).join("");
  }
  return "";
}

document.getElementById("days").innerHTML = days.map(([title, count]) => {
  let hours = "";
  for (let h = 0; h < count; h++) hours += `<span class="${shift(h)}">${h}</span>`;
  return `<div class="day"><div class="day-title">${title}</div><div class="hours">${hours}</div></div>`;
}).join("");

document.getElementById("rows").innerHTML = equipments.map(([name, code]) => {
  let tasks = tasksFor(code);
  if (name.startsWith("E04")) {
    tasks = `<div class="task fixed" style="${span(0, 17.15)}"><b>[F]</b>test26</div>`;
  }
  return `<div class="row">
    <div class="name"><svg><use href="#i-double"/></svg>${name}<em>[${code}]</em></div>
    <div class="track">${tasks}</div>
  </div>`;
}).join("");
```
